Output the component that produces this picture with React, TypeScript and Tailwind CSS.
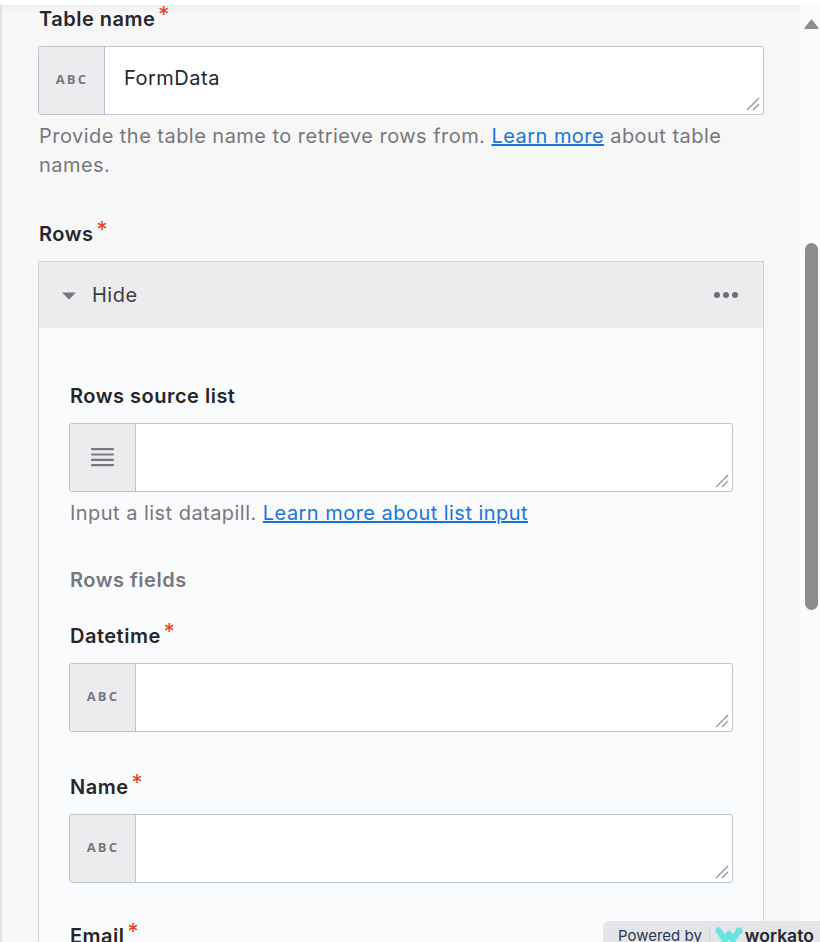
function Label({ text, required = false }: { text: string; required?: boolean }) {
  return (
    <div className="ml-[1px] flex h-[24px] items-center text-[20px] leading-[24px] font-semibold tracking-[0.5px] text-[#26262b]">
      <span>{text}</span>
      {required ? (
        <span className="relative top-[-5px] ml-[3px] text-[22px] leading-[24px] font-normal text-[#e8401c]">*</span>
      ) : null}
    </div>
  );
}

function Grip() {
  return (
    <svg className="absolute right-[3px] bottom-[3px]" width="14" height="14" viewBox="0 0 14 14" fill="none">
      <path d="M1 13 L13 1 M7 13 L13 7" stroke="#8f8f94" strokeWidth="1.2" />
    </svg>
  );
}

function Field({ icon, value }: { icon: "abc" | "list"; value?: string }) {
  return (
    <div className="relative flex h-[69px] overflow-hidden rounded-[3px] border border-[#b9c4d0] bg-white">
      <div className="flex w-[66px] shrink-0 items-center justify-center border-r border-[#b9c4d0] bg-[#ececef]">
        {icon === "abc" ? (
          <span className="pb-[2px] pl-[1px] font-['Open_Sans',sans-serif] text-[13px] font-bold tracking-[2.2px] text-[#77777f]">ABC</span>
        ) : (
          <svg className="mb-[2px]" width="23" height="20" viewBox="0 0 23 20" fill="#77777f">
            <rect y="1" width="23" height="2.2" rx="1" />
            <rect y="6.4" width="23" height="2.2" rx="1" />
            <rect y="11.8" width="23" height="2.2" rx="1" />
            <rect y="17" width="23" height="2.2" rx="1" />
          </svg>
        )}
      </div>
      <div className="flex-1 pt-[16px] pl-[19px] text-[20px] leading-[30px] tracking-[0.5px] text-[#26262b]">{value}</div>
      <Grip />
    </div>
  );
}

export default function App() {
  return (
    <div className="relative flex h-[942px] w-[820px] flex-col overflow-hidden bg-white font-['Inter',sans-serif]">
      <div className="h-[5px] shrink-0 bg-white" />
      <div className="flex min-h-0 flex-1">
        <main className="min-w-0 flex-1 border-l-2 border-[#e2e2e5] bg-[#f7f7f7] pt-[2px] pr-[36px] pl-[36px] shadow-[inset_0_8px_8px_-8px_rgba(0,0,0,0.08)]">
          <Label text="Table name" required />
          <div className="mt-[15px]">
            <Field icon="abc" value="FormData" />
          </div>
          <p className="mt-[7px] ml-[1px] text-[20px] leading-[29px] tracking-[0.46px] text-[#77777f]">
            Provide the table name to retrieve rows from.{" "}
            <a className="text-[#1b75d9] underline">Learn more</a> about table names.
          </p>

          <div className="mt-[42px]">
            <Label text="Rows" required />
          </div>

          <section className="mt-[15px] h-[800px] border border-[#d2d4d8] bg-[#fafbfd]">
            <div className="flex h-[66px] items-center justify-between bg-[#ececef] pr-[25px] pl-[22px]">
              <div className="flex items-center">
                <svg width="16" height="9" viewBox="0 0 16 9" fill="#77777f">
                  <path d="M1 1.5 H15 L8 8.5 Z" />
                </svg>
                <span className="ml-[15px] text-[20px] tracking-[0.5px] text-[#3c3c42]">Hide</span>
              </div>
              <div className="flex gap-[3px]">
                <span className="size-[6px] rounded-full bg-[#6f6f77]" />
                <span className="size-[6px] rounded-full bg-[#6f6f77]" />
                <span className="size-[6px] rounded-full bg-[#6f6f77]" />
              </div>
            </div>

            <div className="px-[30px] pt-[56px]">
              <Label text="Rows source list" />
              <div className="mt-[15px]">
                <Field icon="list" />
              </div>
              <p className="mt-[7px] ml-[1px] text-[20px] leading-[29px] tracking-[0.46px] text-[#77777f]">
                Input a list datapill. <a className="text-[#1b75d9] underline">Learn more about list input</a>
              </p>

              <div className="mt-[40px] ml-[1px] h-[24px] text-[20px] leading-[24px] font-semibold tracking-[0.5px] text-[#77777f]">
                Rows fields
              </div>

              <div className="mt-[32px]">
                <Label text="Datetime" required />
              </div>
              <div className="mt-[15px]">
                <Field icon="abc" />
              </div>

              <div className="mt-[43px]">
                <Label text="Name" required />
              </div>
              <div className="mt-[15px]">
                <Field icon="abc" />
              </div>

              <div className="mt-[41px]">
                <Label text="Email" required />
              </div>
            </div>
          </section>
        </main>

        <aside className="flex w-[20px] shrink-0 flex-col items-center bg-[#fbfbfb] pl-[2px]">
          <svg className="mt-[13px]" width="15" height="12" viewBox="0 0 15 12" fill="#8c8c8c">
            <path d="M7.5 1 L14.5 10 Q15 11 14 11 H1 Q0 11 0.5 10 Z" />
          </svg>
          <div className="mt-[213px] h-[367px] w-[13px] rounded-full bg-[#8c8c8c]" />
        </aside>
      </div>

      <div className="absolute right-0 bottom-0 flex h-[21px] w-[217px] items-start rounded-tl-[6px] bg-[#e3e5e8] pt-[6px] pl-[15px]">
        <span className="text-[15px] leading-[18px] text-[#2a3650]">Powered by</span>
        <span className="mx-[7px] h-[18px] w-px bg-[#cdd0d4]" />
        <svg className="ml-[-2px]" width="28" height="16" viewBox="0 0 28 16" fill="none">
          <path d="M3.5 3.5 L10 13 L14 7 L18 13 L21.5 7" stroke="#66e6dc" strokeWidth="6" strokeLinecap="round" strokeLinejoin="round" />
          <circle cx="24" cy="4" r="3.5" fill="#66e6dc" />
        </svg>
        <span className="ml-[2px] text-[17.5px] leading-[18px] font-semibold text-[#26262b]">workato</span>
      </div>
    </div>
  );
}
